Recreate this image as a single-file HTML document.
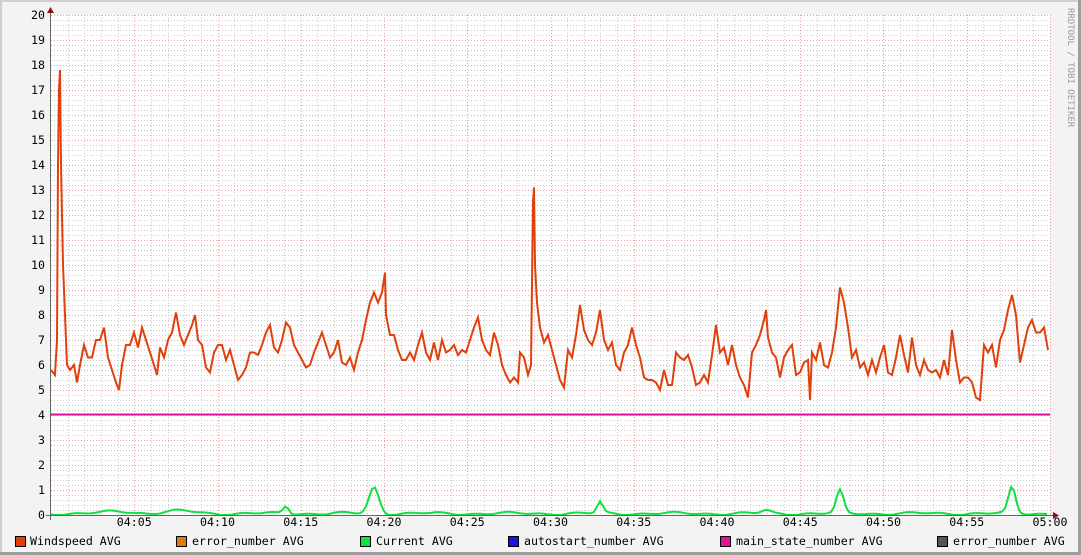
<!DOCTYPE html>
<html><head><meta charset="utf-8"><style>
html,body{margin:0;padding:0;background:#f3f3f3;}
svg{display:block;}
text{font-family:"DejaVu Sans Mono","Liberation Mono",monospace;font-size:11.6px;fill:#000;}
</style></head><body>
<svg id="s" width="1081" height="555" xmlns="http://www.w3.org/2000/svg">
<rect x="0" y="0" width="1081" height="555" fill="#f3f3f3"/>
<rect x="0" y="0" width="1081" height="2" fill="#cfcfcf"/>
<rect x="0" y="0" width="2" height="555" fill="#cfcfcf"/>
<rect x="0" y="552" width="1081" height="3" fill="#9e9e9e"/>
<rect x="1078" y="0" width="3" height="555" fill="#9e9e9e"/>
<rect x="51" y="15" width="999" height="500" fill="#fff"/>
<g id="grid"></g>
<g id="labels"></g>
<line x1="51" y1="414.5" x2="1050" y2="414.5" stroke="#e0109a" stroke-width="2"/>
<polyline id="cur" fill="none" stroke="#10e040" stroke-width="2"/>
<polyline id="wind" fill="none" stroke="#e0400c" stroke-width="2"/>
<line x1="50.5" y1="10" x2="50.5" y2="520" stroke="#666" stroke-width="1"/>
<line x1="46" y1="515.5" x2="1055" y2="515.5" stroke="#666" stroke-width="1"/>
<polygon points="47,13 54,13 50.5,7" fill="#901010"/>
<polygon points="1053,512 1053,519 1059,515.5" fill="#901010"/>
<text x="1068" y="8" transform="rotate(90 1068 8)" style="font-size:9px;fill:#999">RRDTOOL / TOBI OETIKER</text>
<g>
<rect x="15.5" y="536.5" width="10" height="10" fill="#e0400c" stroke="#000"/>
<text x="30" y="545">Windspeed AVG</text>
<rect x="176.5" y="536.5" width="10" height="10" fill="#e07a0c" stroke="#000"/>
<text x="192" y="545">error_number AVG</text>
<rect x="360.5" y="536.5" width="10" height="10" fill="#10e040" stroke="#000"/>
<text x="376" y="545">Current AVG</text>
<rect x="508.5" y="536.5" width="10" height="10" fill="#2010e0" stroke="#000"/>
<text x="524" y="545">autostart_number AVG</text>
<rect x="720.5" y="536.5" width="10" height="10" fill="#e0109a" stroke="#000"/>
<text x="736" y="545">main_state_number AVG</text>
<rect x="937.5" y="536.5" width="10" height="10" fill="#555" stroke="#000"/>
<text x="953" y="545">error_number AVG</text>
</g>
</svg>
<script>
var NS="http://www.w3.org/2000/svg";
var g=document.getElementById('grid'),L=document.getElementById('labels');
function ln(x1,y1,x2,y2,c){var e=document.createElementNS(NS,'line');e.setAttribute('x1',x1);e.setAttribute('y1',y1);e.setAttribute('x2',x2);e.setAttribute('y2',y2);e.setAttribute('stroke',c);e.setAttribute('stroke-width',1);e.setAttribute('stroke-dasharray','1,2');g.appendChild(e);}
function tx(x,y,s,a){var e=document.createElementNS(NS,'text');e.setAttribute('x',x);e.setAttribute('y',y);e.setAttribute('text-anchor',a);e.textContent=s;L.appendChild(e);}
var pm=999/60;
for(var m=1;m<=60;m++){var x=Math.round(51+m*pm)+0.5;ln(x,15,x,515,m%5==0?'#e8a0a0':'#cccccc');}
for(var i=1;i<=100;i++){var y=515-i*5+0.5;ln(51,y,1050,y,i%5==0?'#e8a0a0':'#cccccc');}
for(var v=0;v<=20;v++){tx(45,515-v*25+4,String(v),'end');}
for(var m=5;m<=60;m+=5){var hh=m==60?'05':'04',mm=m==60?'00':(m<10?'0'+m:''+m);tx(51+m*pm,526,hh+':'+mm,'middle');}
var W=[51,5.8,55,5.6,57,7,58,14,59,17,60,17.8,61,14,63,10,65,8,67,6,70,5.8,74,6,77,5.3,80,6,84,6.8,88,6.3,92,6.3,96,7,100,7,104,7.5,108,6.3,112,5.8,116,5.3,119,5,122,6,126,6.8,130,6.8,134,7.3,138,6.7,142,7.5,146,7,150,6.5,154,6,157,5.6,160,6.7,164,6.3,168,7,172,7.3,176,8.1,180,7.2,184,6.8,188,7.2,192,7.6,195,8,198,7,202,6.8,206,5.9,210,5.7,214,6.5,218,6.8,222,6.8,226,6.2,230,6.6,234,6,238,5.4,242,5.6,246,5.9,250,6.5,254,6.5,258,6.4,262,6.8,266,7.3,270,7.6,274,6.7,278,6.5,282,7,286,7.7,290,7.5,294,6.8,298,6.5,302,6.2,306,5.9,310,6,314,6.5,318,6.9,322,7.3,326,6.8,330,6.3,334,6.5,338,7,342,6.1,346,6,350,6.3,354,5.8,358,6.5,362,7,366,7.8,370,8.5,374,8.9,378,8.5,382,8.9,385,9.7,386,8,390,7.2,394,7.2,398,6.6,402,6.2,406,6.2,410,6.5,414,6.2,418,6.8,422,7.3,426,6.5,430,6.2,434,6.9,438,6.2,442,7,446,6.5,450,6.6,454,6.8,458,6.4,462,6.6,466,6.5,470,7,474,7.5,478,7.9,482,7,486,6.6,490,6.4,494,7.3,498,6.8,502,6,506,5.6,510,5.3,514,5.5,518,5.3,520,6.5,524,6.3,528,5.6,531,6,533,12.5,534,13.1,535,10,537,8.5,540,7.5,544,6.9,548,7.2,552,6.6,556,6,560,5.4,564,5.1,568,6.6,572,6.3,576,7.2,580,8.4,584,7.4,588,7,592,6.8,596,7.3,600,8.2,604,7,608,6.6,612,6.9,616,6,620,5.8,624,6.5,628,6.8,632,7.5,636,6.8,640,6.3,644,5.5,648,5.4,652,5.4,656,5.3,660,5,664,5.8,668,5.2,672,5.2,676,6.5,680,6.3,684,6.2,688,6.4,692,5.9,696,5.2,700,5.3,704,5.6,708,5.3,712,6.4,716,7.6,720,6.5,724,6.7,728,6,732,6.8,736,6,740,5.5,744,5.2,748,4.7,752,6.5,756,6.8,760,7.2,764,7.8,766,8.2,768,7.1,772,6.5,776,6.3,780,5.5,784,6.3,788,6.6,792,6.8,796,5.6,800,5.7,804,6.1,808,6.2,810,4.6,812,6.5,816,6.2,820,6.9,824,6,828,5.9,832,6.5,836,7.5,840,9.1,844,8.5,848,7.5,852,6.3,856,6.6,860,5.9,864,6.1,868,5.6,872,6.2,876,5.7,880,6.3,884,6.8,888,5.7,892,5.6,896,6.3,900,7.2,904,6.4,908,5.7,912,7.1,916,6,920,5.6,924,6.2,928,5.8,932,5.7,936,5.8,940,5.5,944,6.2,948,5.6,952,7.4,956,6.2,960,5.3,964,5.5,968,5.5,972,5.3,976,4.7,980,4.6,984,6.8,988,6.5,992,6.8,996,5.9,1000,7,1004,7.4,1008,8.2,1012,8.8,1016,8,1020,6.1,1024,6.8,1028,7.5,1032,7.8,1036,7.3,1040,7.3,1044,7.5,1048,6.6];
var p=[];for(var i=0;i<W.length;i+=2)p.push(W[i]+','+(515-W[i+1]*25).toFixed(1));
document.getElementById('wind').setAttribute('points',p.join(' '));
var bumps=[[286,0.3,4],[374,1.05,7],[600,0.45,4],[840,0.9,5],[1012,1.05,5],[766,0.12,6],[120,0.08,20],[180,0.1,20]];
var c=[];for(var x=51;x<=1048;x+=3){var v=0.06+0.04*Math.sin(x/13)+0.03*Math.sin(x/5.3);for(var b=0;b<bumps.length;b++){var d=(x-bumps[b][0])/bumps[b][2];v+=bumps[b][1]*Math.exp(-d*d);}if(v<0)v=0;c.push(x+','+(515-v*25).toFixed(1));}
document.getElementById('cur').setAttribute('points',c.join(' '));
</script>
</body></html>
